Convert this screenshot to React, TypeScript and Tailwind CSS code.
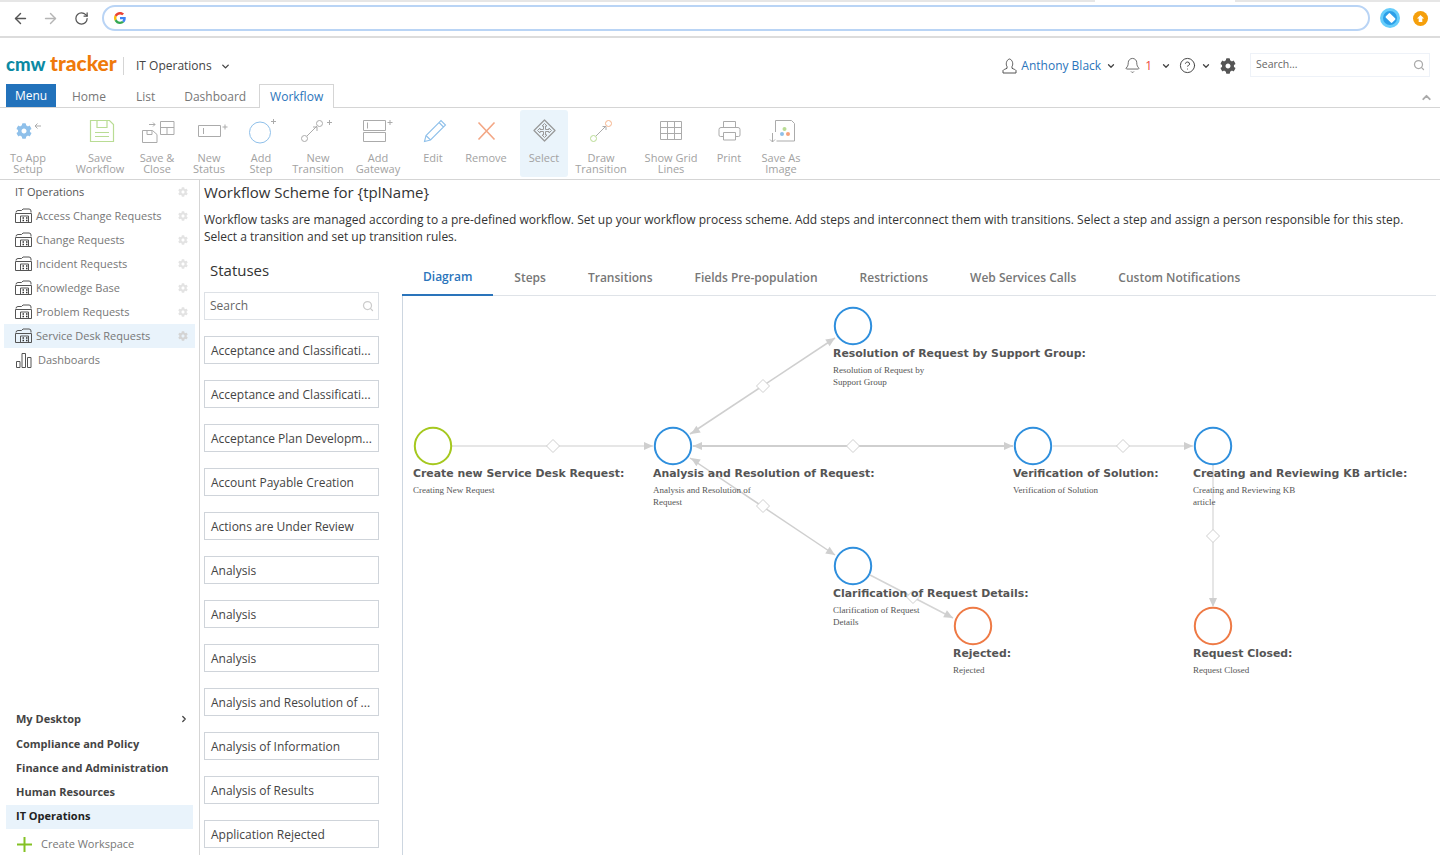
import { ArrowLeft, ArrowRight, RotateCw, ChevronDown, ChevronUp, ChevronRight, Search, Bell, CircleHelp } from 'lucide-react';
import { FaCog } from 'react-icons/fa';
import type { ReactNode } from 'react';

const gray = '#ababab';
const blue = '#8fc0ea';

function Box({ x, children }: { x: number; children: ReactNode }) {
  return (
    <svg width="44" height="30" viewBox={`${x - 22} 117 44 30`} fill="none" stroke={gray} strokeWidth="1">
      {children}
    </svg>
  );
}

function Plus({ x, y }: { x: number; y: number }) {
  return <path d={`M${x - 2.5} ${y}h5M${x} ${y - 2.5}v5`} />;
}

const toolbar = [
  {
    label: ['To App', 'Setup'], cn: 'w-[48px] ml-[4px]',
    icon: (
      <Box x={28}>
        <foreignObject x="16" y="123" width="16" height="16"><FaCog color={blue} size={16} /></foreignObject>
        <path d="M41 126h-6m2.500-2.500L35 126l2.500 2.500" />
      </Box>
    ),
  },
  {
    label: ['Save', 'Workflow'], cn: 'w-[56px] ml-[20px]',
    icon: (
      <Box x={100}>
        <path d="M90.500 120.500h19l4 4v17h-23z M97 120.500v7h10v-7 M95 132.500h14M95 136.500h14" stroke="#b9dc94" strokeWidth="1.200" />
      </Box>
    ),
  },
  {
    label: ['Save &', 'Close'], cn: 'w-[46px] ml-[6px]',
    icon: (
      <Box x={157}>
        <path d="M142.500 130.500h10l4.500 4v8h-14.500z M147 130.500v4h5v-4" />
        <path d="M149 124.500h6m-2-2 2 2-2 2" />
        <path d="M160.500 121.500h13.500v13h-13.500z M160.500 127.500h13.500M167 127.500v7" />
      </Box>
    ),
  },
  {
    label: ['New', 'Status'], cn: 'w-[46px] ml-[6px]',
    icon: (
      <Box x={209}>
        <path d="M198.500 125.500h22v11h-22z M203.500 128v6" />
        <Plus x={225} y={127} />
      </Box>
    ),
  },
  {
    label: ['Add', 'Step'], cn: 'w-[46px] ml-[6px]',
    icon: (
      <Box x={261}>
        <circle cx="260" cy="132.500" r="10.500" stroke={blue} />
        <Plus x={273.500} y={121.500} />
      </Box>
    ),
  },
  {
    label: ['New', 'Transition'], cn: 'w-[56px] ml-[6px]',
    icon: (
      <Box x={318}>
        <circle cx="304.500" cy="138.500" r="3" />
        <circle cx="319.500" cy="123.500" r="3" />
        <path d="M307 136l10-10M313 127h4v4" />
        <Plus x={329.500} y={122.500} />
      </Box>
    ),
  },
  {
    label: ['Add', 'Gateway'], cn: 'w-[56px] ml-[4px]',
    icon: (
      <Box x={378}>
        <path d="M363.500 120.500h22v10h-22z M363.500 132.500h22v9h-22z M367.500 122.500v6" />
        <Plus x={390} y={122.500} />
      </Box>
    ),
  },
  {
    label: ['Edit'], cn: 'w-[42px] ml-[6px]',
    icon: (
      <Box x={433}>
        <path d="M424.500 141.500l1.500-6 15-15 4.500 4.500-15 15z M426 135.500l4.500 4.500M439 122.500l4.500 4.500" stroke={blue} strokeWidth="1.100" />
      </Box>
    ),
  },
  {
    label: ['Remove'], cn: 'w-[52px] ml-[6px]',
    icon: (
      <Box x={486}>
        <path d="M478.500 122.500l16 17M494.500 122.500l-16 17" stroke="#f3a684" strokeWidth="1.600" />
      </Box>
    ),
  },
  {
    label: ['Select'], cn: 'w-[48px] ml-[8px] bg-[#eaf4fb] rounded-[3px]',
    icon: (
      <Box x={544}>
        <path d="M544.500 120l10.500 10.500L544.500 141 534 130.500z" strokeWidth="1.300" stroke="#9a9a9a" strokeLinejoin="round" />
        <path d="M544.500 123.500l-2.500 2.500h1.500v3.500h-3.500V128l-2.500 2.500 2.500 2.500v-1.500h3.500V135H542l2.500 2.500 2.500-2.500h-1.500v-3.500h3.500v1.500l2.500-2.500-2.500-2.500v1.500h-3.500V126h1.500z" stroke="#9a9a9a" />
      </Box>
    ),
  },
  {
    label: ['Draw', 'Transition'], cn: 'w-[58px] ml-[4px]',
    icon: (
      <Box x={601}>
        <circle cx="593.500" cy="138.500" r="3" stroke="#b9dc94" />
        <circle cx="608.500" cy="123.500" r="3" stroke="#f6b48c" />
        <path d="M596 136l10-10M602.500 126.500h3.500v3.500" />
      </Box>
    ),
  },
  {
    label: ['Show Grid', 'Lines'], cn: 'w-[62px] ml-[10px]',
    icon: (
      <Box x={671}>
        <path d="M660.500 121.500h21v18h-21z M660.500 127.500h21M660.500 133.500h21M667.500 121.500v18M674.500 121.500v18" />
      </Box>
    ),
  },
  {
    label: ['Print'], cn: 'w-[42px] ml-[6px]',
    icon: (
      <Box x={729}>
        <path d="M723.500 128v-6.500h12v6.500 M723.500 136.500h-3a1.500 1.500 0 0 1-1.500-1.500v-5.500a2 2 0 0 1 2-2h17a2 2 0 0 1 2 2v5.500a1.500 1.500 0 0 1-1.500 1.500h-3 M723.500 132.500h12v7.500h-12z" />
      </Box>
    ),
  },
  {
    label: ['Save As', 'Image'], cn: 'w-[50px] ml-[6px]',
    icon: (
      <Box x={781}>
        <path d="M775.500 132v-11.500h16l3 3v17.500h-18 M772.500 133v9m-2.500-2.500 2.500 2.500 2.500-2.500" />
        <circle cx="784.500" cy="129" r="2" fill="#b9dc94" stroke="none" />
        <circle cx="782" cy="134" r="2" fill={blue} stroke="none" />
        <circle cx="788" cy="134" r="2" fill="#f6a27c" stroke="none" />
      </Box>
    ),
  },
];

const spaces = ['Access Change Requests', 'Change Requests', 'Incident Requests', 'Knowledge Base', 'Problem Requests', 'Service Desk Requests'];

const statuses = [
  'Acceptance and Classificati...',
  'Acceptance and Classificati...',
  'Acceptance Plan Developm...',
  'Account Payable Creation',
  'Actions are Under Review',
  'Analysis',
  'Analysis',
  'Analysis',
  'Analysis and Resolution of ...',
  'Analysis of Information',
  'Analysis of Results',
  'Application Rejected',
];

const tabs = ['Diagram', 'Steps', 'Transitions', 'Fields Pre-population', 'Restrictions', 'Web Services Calls', 'Custom Notifications'];

// page coordinates, the svg viewBox below starts at the canvas corner
const nodes = [
  { x: 433, y: 446, color: '#a5c81f', title: 'Create new Service Desk Request:', sub: ['Creating New Request'] },
  { x: 673, y: 446, color: '#2f8fdd', title: 'Analysis and Resolution of Request:', sub: ['Analysis and Resolution of', 'Request'] },
  { x: 853, y: 326, color: '#2f8fdd', title: 'Resolution of Request by Support Group:', sub: ['Resolution of Request by', 'Support Group'] },
  { x: 1033, y: 446, color: '#2f8fdd', title: 'Verification of Solution:', sub: ['Verification of Solution'] },
  { x: 1213, y: 446, color: '#2f8fdd', title: 'Creating and Reviewing KB article:', sub: ['Creating and Reviewing KB', 'article'] },
  { x: 853, y: 566, color: '#2f8fdd', title: 'Clarification of Request Details:', sub: ['Clarification of Request', 'Details'] },
  { x: 973, y: 626, color: '#ee7a45', title: 'Rejected:', sub: ['Rejected'] },
  { x: 1213, y: 626, color: '#ee7a45', title: 'Request Closed:', sub: ['Request Closed'] },
];

const edges = [
  { d: 'M451 446H653', color: '#dedede', w: 1.5 },
  { d: 'M693 446H1013', color: '#cfcfcf', w: 2 },
  { d: 'M1053 446H1193', color: '#dedede', w: 1.5 },
  { d: 'M690 434L835 338', color: '#cfcfcf', w: 1.5 },
  { d: 'M690 458L835 555', color: '#cfcfcf', w: 1.5 },
  { d: 'M870 575L953 618', color: '#d4d4d4', w: 1.5 },
  { d: 'M1213 464V606', color: '#dedede', w: 1.5 },
];

const arrows = [
  [653, 446, 0], [693, 446, 180], [1013, 446, 0], [1193, 446, 0],
  [691, 434, 147], [835, 338, -33], [691, 458, 213], [835, 555, 33], [953, 618, 28], [1213, 607, 90],
];

const diamonds = [[553, 446], [853, 446], [1123, 446], [763, 386], [763, 506], [913, 597], [1213, 536]];

function SpaceIcon() {
  return (
    <svg width="17" height="15" viewBox="0 0 17 15" fill="none" stroke="#555" strokeWidth="1" className="shrink-0 -mt-[2px]">
      <path d="M1 4.500a2 2 0 0 1 2-2h3.500l1.500-1.500h6a2 2 0 0 1 2 2v1.500M.5 5.500h16v9H.5z" />
      <path d="M5.500 14.500V8h8v6.500" />
      <path d="M7.500 10h1.500M11 10h1.500M7.500 12.500h1.500M11 12.500h1.500" strokeWidth="1.400" stroke="#333" />
    </svg>
  );
}

function GoogleG() {
  return (
    <svg width="12" height="12" viewBox="0 0 48 48">
      <path fill="#ea4335" d="M24 9.500c3.500 0 6.700 1.200 9.200 3.600l6.900-6.900C35.900 2.400 30.500 0 24 0 14.600 0 6.500 5.400 2.600 13.200l8 6.200C12.400 13.700 17.700 9.500 24 9.500z" />
      <path fill="#4285f4" d="M47 24.500c0-1.600-.1-3.100-.4-4.500H24v9h12.900c-.6 3-2.200 5.500-4.700 7.200l7.700 6c4.500-4.200 7.100-10.300 7.100-17.700z" />
      <path fill="#fbbc05" d="M10.500 28.600c-.5-1.400-.8-3-.8-4.600s.3-3.200.8-4.600l-8-6.200C1 16.500 0 20.100 0 24s1 7.500 2.600 10.800z" />
      <path fill="#34a853" d="M24 48c6.500 0 11.900-2.100 15.900-5.800l-7.700-6c-2.200 1.500-4.900 2.300-8.200 2.300-6.300 0-11.600-4.200-13.500-9.900l-8 6.200C6.500 42.600 14.600 48 24 48z" />
    </svg>
  );
}

export default function App() {
  return (
    <div className="w-[1440px] h-[859px] overflow-hidden bg-white text-[12px] text-[#444] font-['Open_Sans',sans-serif]">
      {/* browser chrome */}
      <div className="h-[38px] border-b-[2px] border-[#dcdcdc] flex flex-col">
        <div className="flex h-[2px] shrink-0">
          <div className="w-[1095px] bg-[#e6e6e6]" />
          <div className="w-[140px] bg-white" />
          <div className="flex-1 bg-[#e6e6e6]" />
        </div>
        <div className="flex flex-1 items-center pl-[12px] pb-[2px]">
          <ArrowLeft size={17} color="#555" strokeWidth={2} />
          <ArrowRight size={17} color="#b5b5b5" strokeWidth={2} className="ml-[13px]" />
          <RotateCw size={15} color="#555" strokeWidth={2} className="ml-[15px]" />
          <div className="ml-[13px] w-[1268px] h-[26px] rounded-full border-[2px] border-[#b9d4f5] flex items-center pl-[10px]">
            <GoogleG />
          </div>
          <div className="ml-[10px] w-[20px] h-[20px] rounded-full bg-[#66cdfb] flex items-center justify-center">
            <div className="w-[14px] h-[14px] rounded-full bg-[#2c9fe8] flex items-center justify-center">
              <div className="w-[9px] h-[6px] bg-white rounded-[1px] rotate-45" />
            </div>
          </div>
          <div className="ml-[13px] w-[15px] h-[15px] rounded-full bg-[#f59f0b] flex items-center justify-center">
            <svg width="9" height="9" viewBox="0 0 10 10"><path d="M5 1l4 4H7v4H3V5H1z" fill="#fff" /></svg>
          </div>
        </div>
      </div>

      {/* app header */}
      <div className="h-[46px] flex items-center pl-[6px] pr-[10px] pt-[9px]">
        <span className="w-[111px] mb-[5px] flex items-baseline font-black leading-none font-['Lato',sans-serif] whitespace-nowrap">
          <span className="w-[44px] text-[18.500px] text-[#0b8aa3]">cmw</span>
          <span className="text-[21px] text-[#ef7a0a]">tracker</span>
        </span>
        <div className="ml-[6px] w-px h-[18px] bg-[#d5d5d5]" />
        <span className="ml-[12px] text-[12px] text-[#444]">IT Operations</span>
        <ChevronDown size={11} strokeWidth={3} className="ml-[8px] mt-[2px]" color="#444" />
        <div className="ml-auto flex items-center">
          <svg width="15" height="16" viewBox="0 0 15 16" fill="none" stroke="#555" strokeWidth="1">
            <path d="M5 8.500C3.800 7 3.800 2 7.500 1c3.700 1 3.700 6 2.500 7.500v1.800c1.500.8 3.500 1.200 4 2.200v2.500H1v-2.500c.5-1 2.500-1.400 4-2.200z" />
          </svg>
          <span className="ml-[4px] text-[#2a74bb]">Anthony Black</span>
          <ChevronDown size={10} strokeWidth={3} className="ml-[5px]" color="#444" />
          <Bell size={17} color="#555" strokeWidth={1.200} className="ml-[8px]" />
          <span className="ml-[4px] text-[#ee4a3a]">1</span>
          <ChevronDown size={10} strokeWidth={3} className="ml-[9px]" color="#444" />
          <CircleHelp size={17} color="#444" strokeWidth={1.400} className="ml-[8px]" />
          <ChevronDown size={10} strokeWidth={3} className="ml-[5px]" color="#444" />
          <FaCog size={16} color="#555" className="ml-[9px]" />
          <div className="ml-[14px] mb-[2px] w-[180px] h-[24px] border border-[#eef2f8] flex items-center pl-[5px] pr-[4px] text-[10.500px] text-[#666]">
            Search...
            <Search size={12} color="#aaa" strokeWidth={2.500} className="ml-auto" />
          </div>
        </div>
      </div>

      {/* tabs */}
      <div className="h-[24px] flex items-end border-b border-[#d5d5d5] pl-[6px] pr-[7px]">
        <div className="w-[50px] h-[23px] bg-[#2272bb] text-white flex items-center justify-center">Menu</div>
        <span className="ml-[16px] h-[23px] leading-[25px] text-[#777]">Home</span>
        <span className="ml-[30px] h-[23px] leading-[25px] text-[#777]">List</span>
        <span className="ml-[29px] h-[23px] leading-[25px] text-[#777]">Dashboard</span>
        <div className="ml-[13px] w-[75px] h-[24px] -mb-px border border-b-0 border-[#d5d5d5] bg-white text-[#2a74bb] flex items-center justify-center">Workflow</div>
        <ChevronUp size={13} strokeWidth={3.500} color="#aaa" className="ml-auto mb-[3px]" />
      </div>

      {/* toolbar */}
      <div className="h-[72px] border-b border-[#d5d5d5] pt-[2px] flex items-start">
        {toolbar.map((t) => (
          <div key={t.label.join(' ')} className={`h-[67px] flex flex-col items-center pt-[7px] shrink-0 ${t.cn}`}>
            {t.icon}
            <div className="mt-[5px] text-[11px] leading-[11px] text-[#a2a2a2] text-center whitespace-nowrap">
              {t.label.map((l) => (
                <div key={l}>{l}</div>
              ))}
            </div>
          </div>
        ))}
      </div>

      <div className="flex h-[675px]">
        {/* sidebar */}
        <div className="w-[200px] shrink-0 border-r border-[#d5d5d5] flex flex-col px-[4px] text-[11px]">
          <div className="h-[24px] flex items-center pl-[11px] pr-[7px] text-[#555]">
            IT Operations
            <FaCog size={10} color="#e3e3e3" className="ml-auto" />
          </div>
          {spaces.map((s) => (
            <div key={s} className={`h-[24px] flex items-center pl-[11px] pr-[7px] text-[#777] ${s === 'Service Desk Requests' ? 'bg-[#e9f3fb] text-[#555]' : ''}`}>
              <SpaceIcon />
              <span className="ml-[4px]">{s}</span>
              <FaCog size={10} color={s === 'Service Desk Requests' ? '#d4d4d4' : '#e3e3e3'} className="ml-auto" />
            </div>
          ))}
          <div className="h-[24px] flex items-center pl-[12px] text-[#777]">
            <svg width="16" height="16" viewBox="0 0 16 16" fill="none" stroke="#555">
              <path d="M.5 9.500h3.500v6H.5zM6 1.500h3.500v14H6zM11.500 5.500H15v10h-3.500z" />
            </svg>
            <span className="ml-[6px]">Dashboards</span>
          </div>
          <div className="mt-auto flex flex-col font-bold text-[#444] pl-[2px]">
            <div className="h-[24px] pb-[4px] flex items-center pl-[10px] pr-[6px]">
              My Desktop
              <ChevronRight size={10} strokeWidth={3} color="#444" className="ml-auto" />
            </div>
            <div className="h-[24px] pb-[2px] flex items-center pl-[10px]">Compliance and Policy</div>
            <div className="h-[24px] pb-[2px] flex items-center pl-[10px]">Finance and Administration</div>
            <div className="h-[24px] pb-[2px] flex items-center pl-[10px]">Human Resources</div>
            <div className="h-[24px] pb-[2px] w-[187px] flex items-center pl-[10px] bg-[#e9f3fb] text-[#222]">IT Operations</div>
            <div className="h-[26px] pt-[4px] flex items-center pl-[11px] font-normal text-[#777]">
              <svg width="15" height="15" viewBox="0 0 15 15" fill="none" stroke="#84c124" strokeWidth="2">
                <path d="M0 7.500h15M7.500 0v15" />
              </svg>
              <span className="ml-[9px]">Create Workspace</span>
            </div>
          </div>
        </div>

        {/* main */}
        <div className="flex-1 min-w-0 flex flex-col px-[4px]">
          <div className="h-[28px] -mt-[2px] flex items-center text-[15px] text-[#333]">Workflow Scheme for {'{tplName}'}</div>
          <p className="mt-[5px] h-[54px] text-[12px] leading-[17px] text-[#333]">
            Workflow tasks are managed according to a pre-defined workflow. Set up your workflow process scheme. Add steps and interconnect them with transitions. Select a step and assign a person responsible for this step. Select a transition and set up transition rules.
          </p>
          <div className="flex-1 min-h-0 flex">
            {/* statuses */}
            <div className="w-[175px] shrink-0 flex flex-col overflow-hidden -mt-[8px]">
              <div className="h-[26px] shrink-0 pl-[6px] flex items-center text-[15px] text-[#333]">Statuses</div>
              <div className="mt-[9px] h-[28px] shrink-0 border border-[#dde1e6] flex items-center pl-[5px] pr-[4px] text-[#666]">
                Search
                <Search size={12} color="#ccc" strokeWidth={2.500} className="ml-auto" />
              </div>
              {statuses.map((s, i) => (
                <div key={i} className="mt-[16px] h-[28px] shrink-0 border border-[#cfd4da] flex items-center pl-[6px] pt-[2px] text-[#444] whitespace-nowrap overflow-hidden">
                  {s}
                </div>
              ))}
            </div>

            {/* tabs and diagram */}
            <div className="ml-[23px] flex-1 min-w-0 flex flex-col">
              <div className="h-[31px] shrink-0 flex border-b border-[#dfe3e8]">
                {tabs.map((t) => (
                  <div key={t} className={`h-[31px] pb-[6px] flex items-center font-semibold whitespace-nowrap ${t === 'Diagram' ? 'px-[21px] text-[#2a74bb] border-b-[2px] border-[#2a74bb]' : 'px-[21px] text-[#777]'}`}>
                    {t}
                  </div>
                ))}
              </div>
              <div className="relative flex-1 min-h-0 border-l border-[#cdd6e0]">
                <svg className="absolute inset-0" width="1033" height="559" viewBox="403 296 1033 559" fill="none">
                  {edges.map((e) => (
                    <path key={e.d} d={e.d} stroke={e.color} strokeWidth={e.w} />
                  ))}
                  {arrows.map(([x, y, r]) => (
                    <path key={`${x}-${y}`} d="M0 0L-9 -4V4Z" fill="#cfcfcf" transform={`translate(${x} ${y}) rotate(${r})`} />
                  ))}
                  {diamonds.map(([x, y]) => (
                    <path key={`${x}-${y}`} d={`M${x} ${y - 6.500}L${x + 6.500} ${y}L${x} ${y + 6.500}L${x - 6.500} ${y}Z`} fill="#fff" stroke="#d0d0d0" strokeLinejoin="round" />
                  ))}
                  {nodes.map((n) => (
                    <circle key={n.title} cx={n.x} cy={n.y} r="18.200" fill="none" stroke={n.color} strokeWidth="2" />
                  ))}
                </svg>
                {nodes.map((n) => (
                  <div key={n.title} className="absolute whitespace-nowrap" style={{ left: n.x - 20 - 403, top: n.y + 20 - 296 }}>
                    <div className="h-[16px] leading-[16px] text-[10.900px] font-bold text-[#555] font-['DejaVu_Sans',sans-serif]">{n.title}</div>
                    <div className="mt-[2px] text-[9px] leading-[12px] text-[#555] font-['Liberation_Serif',serif]">
                      {n.sub.map((l) => (
                        <div key={l}>{l}</div>
                      ))}
                    </div>
                  </div>
                ))}
              </div>
            </div>
          </div>
        </div>
      </div>
    </div>
  );
}
